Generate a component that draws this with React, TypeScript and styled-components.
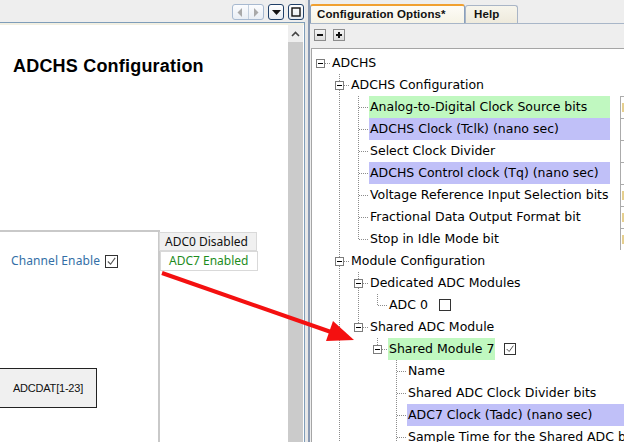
import React from 'react';
import styled, { createGlobalStyle } from 'styled-components';

const Global = createGlobalStyle`
  html, body { margin: 0; padding: 0; background: #eeeeee; overflow: hidden; }
  #root { width: 624px; height: 442px; }
`;

const Shell = styled.div`
  position: relative;
  width: 624px;
  height: 442px;
  display: flex;
  background: #eeeeee;
  overflow: hidden;
  font-family: "DejaVu Sans", sans-serif;
`;

/* ---------- left editor ---------- */
const LeftPanel = styled.div`
  width: 305px;
  flex-shrink: 0;
  display: flex;
  flex-direction: column;
`;

const TopBar = styled.div`
  height: 22px;
  box-sizing: border-box;
  display: flex;
  justify-content: flex-end;
  align-items: flex-start;
  padding: 4px 1px 0 0;
  gap: 4px;
`;

const NavGroup = styled.div`
  width: 32px;
  height: 16px;
  box-sizing: border-box;
  border: 1px solid #a7b9d0;
  border-radius: 3px;
  background: linear-gradient(#fbfcfe, #e9eef4);
  display: flex;
`;

const NavHalf = styled.div<{ $sep?: boolean }>`
  flex: 1;
  display: flex;
  align-items: center;
  justify-content: center;
  border-left: ${p => (p.$sep ? '1px solid #c3cfdd' : 'none')};
`;

const WinButton = styled.div`
  width: 16px;
  height: 16px;
  box-sizing: border-box;
  border: 1px solid #1e3f68;
  border-radius: 3px;
  background: linear-gradient(#ffffff, #e6ebf1);
  display: flex;
  align-items: center;
  justify-content: center;
`;

const LeftBody = styled.div`
  flex: 1;
  display: flex;
  flex-direction: column;
  border-top: 1px solid #7f9db9;
  border-right: 1px solid #7f9db9;
  min-height: 0;
`;

const Stripe = styled.div`
  height: 2px;
  background: #f2f0e3;
`;

const EditorRow = styled.div`
  flex: 1;
  display: flex;
  background: #ffffff;
  padding-right: 1px;
  min-height: 0;
`;

const Canvas = styled.div`
  position: relative;
  flex: 1;
  overflow: hidden;
  background: #ffffff;
  padding: 31px 0 0 13px;
`;

const Heading = styled.h1`
  margin: 0;
  font-family: "Liberation Sans", Arial, sans-serif;
  font-weight: bold;
  font-size: 18px;
  letter-spacing: 0.2px;
  line-height: 21px;
  color: #000;
`;

const Frame = styled.div`
  position: absolute;
  left: -2px;
  top: 205px;
  width: 160px;
  height: 400px;
  border-top: 2px solid #c9c9c9;
  border-right: 2px solid #c9c9c9;
`;

const Tag = styled.div<{ $x: number; $y: number; $h: number; $on?: boolean }>`
  position: absolute;
  left: ${p => p.$x}px;
  top: ${p => p.$y}px;
  width: 98px;
  height: ${p => p.$h}px;
  box-sizing: border-box;
  border: 1px solid #d9d9d9;
  background: ${p => (p.$on ? '#ffffff' : '#f0f0f0')};
  color: ${p => (p.$on ? '#1d8c1d' : '#111111')};
  font-family: "Noto Sans", sans-serif;
  font-size: 12px;
  line-height: ${p => p.$h - 2}px;
  padding-left: ${p => (p.$on ? 8 : 5)}px;
  white-space: nowrap;
`;

const ChannelLine = styled.div`
  position: absolute;
  left: 11px;
  top: 227px;
  display: flex;
  align-items: center;
  gap: 5px;
  font-family: "Noto Sans", sans-serif;
  font-size: 12px;
  letter-spacing: 0.1px;
  line-height: 18px;
  color: #336fa6;
  white-space: nowrap;
`;

const RegisterBox = styled.div`
  position: absolute;
  left: -1px;
  top: 343px;
  width: 98px;
  height: 40px;
  box-sizing: border-box;
  border: 1px solid #222222;
  background: #f0f0f0;
  display: flex;
  align-items: center;
  justify-content: center;
  font-family: "Liberation Sans", Arial, sans-serif;
  font-size: 11px;
  letter-spacing: -0.2px;
  color: #111;
`;

const Scrollbar = styled.div`
  width: 15px;
  display: flex;
  flex-direction: column;
`;

const ScrollUp = styled.div`
  height: 17px;
  background: #eeeeee;
  display: flex;
  align-items: center;
  justify-content: center;
`;

const ScrollTrack = styled.div`
  flex: 1;
  background: #cbcbcb;
`;

const Splitter = styled.div`
  width: 3px;
  flex-shrink: 0;
  background: #e8e8e8;
  border-right: 2px solid #8a9ab3;
`;

/* ---------- right: configuration options ---------- */
const RightPanel = styled.div`
  flex: 1;
  display: flex;
  flex-direction: column;
  min-width: 0;
`;

const TabStrip = styled.div`
  height: 23px;
  display: flex;
  align-items: flex-end;
  flex-shrink: 0;
`;

const Tab = styled.div<{ $active?: boolean; $w: number }>`
  width: ${p => p.$w}px;
  height: ${p => (p.$active ? 19 : 18)}px;
  box-sizing: border-box;
  border: 1px solid ${p => (p.$active ? '#8aa0bc' : '#a9b5c6')};
  border-bottom: none;
  border-top: ${p => (p.$active ? '2px solid #f0a030' : '1px solid #a9b5c6')};
  border-radius: 3px 3px 0 0;
  background: ${p => (p.$active ? 'linear-gradient(#fdfcf7, #f6f3e6)' : 'linear-gradient(#f7f5ec, #eeeadc)')};
  padding-left: ${p => (p.$active ? 6 : 8)}px;
  font-family: "Liberation Sans", Arial, sans-serif;
  font-weight: bold;
  font-size: 11.5px;
  letter-spacing: 0.1px;
  line-height: 16px;
  color: #111;
  white-space: nowrap;
`;

const TabBody = styled.div`
  flex: 1;
  display: flex;
  flex-direction: column;
  border-top: 1px solid #a8b6c8;
  min-height: 0;
`;

const Toolbar = styled.div`
  height: 24px;
  box-sizing: border-box;
  display: flex;
  gap: 7px;
  padding: 5px 0 0 4px;
  flex-shrink: 0;
`;

const ToolButton = styled.div`
  width: 12px;
  height: 12px;
  box-sizing: border-box;
  border: 1px solid #8c8c8c;
  background: linear-gradient(#f4f4f4, #dcdcdc);
  position: relative;
  &::before {
    content: '';
    position: absolute;
    left: 2px;
    top: 4px;
    width: 6px;
    height: 2px;
    background: #111;
  }
`;

const PlusButton = styled(ToolButton)`
  &::after {
    content: '';
    position: absolute;
    left: 4px;
    top: 2px;
    width: 2px;
    height: 6px;
    background: #111;
  }
`;

const TreeBox = styled.div`
  flex: 1;
  margin-left: 1px;
  border-top: 1px solid #a5a5a5;
  border-left: 1px solid #a5a5a5;
  background: #ffffff;
  padding-top: 3px;
  overflow: hidden;
  font-family: "DejaVu Sans", sans-serif;
  font-size: 12.5px;
  color: #000;
`;

const TreeRow = styled.div`
  height: 22px;
  display: flex;
  align-items: stretch;
  white-space: nowrap;
`;

const dotV = `
  background-image: linear-gradient(to bottom, #8c8c8c 50%, transparent 50%);
  background-size: 1px 2px;
`;
const dotH = `
  background-image: linear-gradient(to right, #8c8c8c 50%, transparent 50%);
  background-size: 2px 1px;
`;

const Guide = styled.div<{ $line: boolean }>`
  width: 19px;
  flex-shrink: 0;
  position: relative;
  &::before {
    content: '';
    display: ${p => (p.$line ? 'block' : 'none')};
    position: absolute;
    left: 8px;
    top: 0;
    width: 1px;
    height: 22px;
    ${dotV}
  }
`;

const Handle = styled.div<{ $up: boolean; $down: boolean }>`
  width: 19px;
  flex-shrink: 0;
  position: relative;
  &::before {
    content: '';
    position: absolute;
    left: 8px;
    top: ${p => (p.$up ? 0 : 11)}px;
    width: 1px;
    height: ${p => (p.$up ? 11 : 0) + (p.$down ? 11 : 0)}px;
    ${dotV}
  }
  &::after {
    content: '';
    position: absolute;
    left: 9px;
    top: 11px;
    width: 10px;
    height: 1px;
    ${dotH}
  }
`;

const Expander = styled.div`
  position: absolute;
  z-index: 1;
  left: 4px;
  top: 7px;
  width: 9px;
  height: 9px;
  box-sizing: border-box;
  border: 1px solid #7c7c7c;
  background: #fff;
  &::before {
    content: '';
    position: absolute;
    left: 1px;
    top: 3px;
    width: 5px;
    height: 1px;
    background: #000;
  }
`;

const Label = styled.div<{ $tone?: 'green' | 'blue'; $wide?: boolean }>`
  flex: ${p => (p.$wide ? '1 1 auto' : '0 0 auto')};
  min-width: 0;
  padding: 0 1px 0 1px;
  line-height: 22px;
  background: ${p => (p.$tone === 'green' ? '#c0f8c0' : p.$tone === 'blue' ? '#c0c0f8' : 'transparent')};
`;

const ValueCell = styled.div<{ $mark?: boolean }>`
  flex: 0 0 20px;
  margin: 0 -16px 0 10px;
  box-sizing: border-box;
  border: 1px solid #ababab;
  border-bottom: none;
  background: #fff;
  position: relative;
  &::before {
    content: '';
    display: ${p => (p.$mark ? 'block' : 'none')};
    position: absolute;
    left: 1px;
    top: 6px;
    width: 2px;
    height: 9px;
    background: #e6cf8e;
  }
`;

const Check = styled.div<{ $size: number; $gap: number }>`
  width: ${p => p.$size}px;
  height: ${p => p.$size}px;
  box-sizing: border-box;
  border: 1px solid #333;
  background: #fff;
  margin-left: ${p => p.$gap}px;
  align-self: center;
  display: flex;
  align-items: center;
  justify-content: center;
  flex-shrink: 0;
`;

const Overlay = styled.svg`
  position: absolute;
  left: 0;
  top: 0;
  pointer-events: none;
`;

type Tone = 'green' | 'blue';
interface Item {
  label: string;
  level: number;
  branch?: boolean;
  last?: boolean;
  guides: number[];
  tone?: Tone;
  wide?: boolean;
  value?: 'plain' | 'mark';
  check?: boolean;
}

const items: Item[] = [
  { label: 'ADCHS', level: 0, branch: true, last: true, guides: [] },
  { label: 'ADCHS Configuration', level: 1, branch: true, guides: [] },
  { label: 'Analog-to-Digital Clock Source bits', level: 2, guides: [1], tone: 'green', wide: true, value: 'mark' },
  { label: 'ADCHS Clock (Tclk) (nano sec)', level: 2, guides: [1], tone: 'blue', wide: true, value: 'plain' },
  { label: 'Select Clock Divider', level: 2, guides: [1], wide: true, value: 'plain' },
  { label: 'ADCHS Control clock (Tq) (nano sec)', level: 2, guides: [1], tone: 'blue', wide: true, value: 'plain' },
  { label: 'Voltage Reference Input Selection bits', level: 2, guides: [1], wide: true, value: 'mark' },
  { label: 'Fractional Data Output Format bit', level: 2, guides: [1], wide: true, value: 'mark' },
  { label: 'Stop in Idle Mode bit', level: 2, last: true, guides: [1], wide: true, value: 'mark' },
  { label: 'Module Configuration', level: 1, branch: true, guides: [] },
  { label: 'Dedicated ADC Modules', level: 2, branch: true, guides: [1] },
  { label: 'ADC 0', level: 3, last: true, guides: [1, 2], check: false },
  { label: 'Shared ADC Module', level: 2, branch: true, last: true, guides: [1] },
  { label: 'Shared Module 7', level: 3, branch: true, last: true, guides: [1], tone: 'green', check: true },
  { label: 'Name', level: 4, guides: [1] },
  { label: 'Shared ADC Clock Divider bits', level: 4, guides: [1] },
  { label: 'ADC7 Clock (Tadc) (nano sec)', level: 4, guides: [1], tone: 'blue', wide: true },
  { label: 'Sample Time for the Shared ADC bits', level: 4, guides: [1] },
];

const Tick = ({ size }: { size: number }) => (
  <svg width={size} height={size} viewBox="0 0 12 12">
    <polyline points="2,6 5,9 10,2" fill="none" stroke="#555" strokeWidth="1.2" />
  </svg>
);

const Row = ({ it }: { it: Item }) => {
  const cols = Array.from({ length: it.level }, (_, i) => i);
  return (
    <TreeRow>
      {cols.map(c => (
        <Guide key={c} $line={it.guides.includes(c)} />
      ))}
      <Handle $up={it.level > 0} $down={!it.last}>
        {it.branch && <Expander />}
      </Handle>
      <Label $tone={it.tone} $wide={it.wide}>{it.label}</Label>
      {it.check !== undefined && (
        <Check $size={12} $gap={it.tone ? 9 : 10}>{it.check && <Tick size={10} />}</Check>
      )}
      {it.value && <ValueCell $mark={it.value === 'mark'} />}
    </TreeRow>
  );
};

export default function App() {
  return (
    <>
      <Global />
      <Shell>
        <LeftPanel>
          <TopBar>
            <NavGroup>
              <NavHalf>
                <svg width="6" height="9" viewBox="0 0 6 9"><polygon points="5,0 5,9 0.5,4.5" fill="#a9a9a9" /></svg>
              </NavHalf>
              <NavHalf $sep>
                <svg width="6" height="9" viewBox="0 0 6 9"><polygon points="1,0 1,9 5.5,4.5" fill="#a9a9a9" /></svg>
              </NavHalf>
            </NavGroup>
            <WinButton>
              <svg width="9" height="5" viewBox="0 0 9 5"><polygon points="0,0 9,0 4.5,5" fill="#111" /></svg>
            </WinButton>
            <WinButton>
              <svg width="10" height="10" viewBox="0 0 10 10"><rect x="1" y="1" width="8" height="8" fill="none" stroke="#111" strokeWidth="1.4" /></svg>
            </WinButton>
          </TopBar>
          <LeftBody>
            <Stripe />
            <EditorRow>
              <Canvas>
                <Heading>ADCHS Configuration</Heading>
                <Frame />
                <Tag $x={159} $y={207} $h={19}>ADC0 Disabled</Tag>
                <Tag $x={160} $y={226} $h={20} $on>ADC7 Enabled</Tag>
                <ChannelLine>
                  Channel Enable
                  <Check $size={13} $gap={0}><Tick size={11} /></Check>
                </ChannelLine>
                <RegisterBox>ADCDAT[1-23]</RegisterBox>
              </Canvas>
              <Scrollbar>
                <ScrollUp>
                  <svg width="9" height="6" viewBox="0 0 9 6"><polyline points="1,5 4.5,1.5 8,5" fill="none" stroke="#444" strokeWidth="1.6" /></svg>
                </ScrollUp>
                <ScrollTrack />
              </Scrollbar>
            </EditorRow>
          </LeftBody>
        </LeftPanel>
        <Splitter />
        <RightPanel>
          <TabStrip>
            <Tab $active $w={155}>Configuration Options*</Tab>
            <Tab $w={53}>Help</Tab>
          </TabStrip>
          <TabBody>
            <Toolbar>
              <ToolButton />
              <PlusButton />
            </Toolbar>
            <TreeBox>
              {items.map((it, i) => (
                <Row key={i} it={it} />
              ))}
            </TreeBox>
          </TabBody>
        </RightPanel>
        <Overlay width="624" height="442" viewBox="0 0 624 442">
          <line x1="162" y1="273" x2="331" y2="332" stroke="#f41010" strokeWidth="4" />
          <polygon points="354,340 326,341 333,321" fill="#f41010" />
        </Overlay>
      </Shell>
    </>
  );
}
